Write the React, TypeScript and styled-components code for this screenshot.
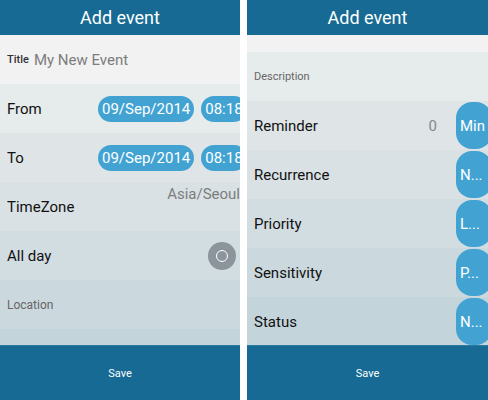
import styled, { createGlobalStyle } from "styled-components";

const Global = createGlobalStyle`
  *, *::before, *::after {
    box-sizing: border-box;
  }

  body {
    margin: 0;
    background: #ffffff;
    font-family: Roboto, "Open Sans", sans-serif;
  }
`;

const Shades = ["#f2f2f2", "#e6ebec", "#dfe5e7", "#d9e1e4", "#d2dde2", "#cbd8de", "#c4d4db"];

const Stage = styled.div`
  display: flex;
  gap: 7px;
  width: 488px;
  height: 400px;
`;

const Screen = styled.div<{ $width: number }>`
  display: flex;
  flex-direction: column;
  width: ${({ $width }) => $width}px;
  height: 400px;
  overflow: hidden;
`;

const Header = styled.div`
  align-items: center;
  background-color: #166a93;
  color: #ffffff;
  display: flex;
  flex: 0 0 35px;
  font-size: 18px;
  justify-content: center;
`;

const Content = styled.div`
  display: flex;
  flex: 1;
  flex-direction: column;
  min-height: 0;
  overflow: hidden;
`;

const Spacer = styled.div<{ $height: number; $shade: string }>`
  background-color: ${({ $shade }) => $shade};
  flex: 0 0 ${({ $height }) => $height}px;
`;

const Row = styled.div<{ $shade: string }>`
  align-items: center;
  background-color: ${({ $shade }) => $shade};
  display: flex;
  flex: 0 0 49px;
  gap: 7px;
  padding-left: 7px;
  position: relative;
`;

const Label = styled.span<{ $fixed?: boolean }>`
  color: #111111;
  flex: ${({ $fixed }) => ($fixed ? "0 0 84px" : "1")};
  font-size: 15px;
  white-space: nowrap;
`;

const Hint = styled.span<{ $size: number }>`
  color: #666666;
  font-size: ${({ $size }) => $size}px;
`;

const TitleRow = styled.div`
  align-items: center;
  display: flex;
  gap: 5px;
`;

const TitleTag = styled.span`
  color: #333333;
  font-size: 11px;
  font-weight: 500;
`;

const Placeholder = styled.span`
  color: #7d7d7d;
  font-size: 15px;
`;

const Pill = styled.span`
  background-color: #42a3d3;
  border-radius: 13px;
  color: #ffffff;
  flex: 0 0 auto;
  font-size: 15px;
  height: 26px;
  line-height: 26px;
  padding: 0 4px;
  white-space: nowrap;
`;

const SidePill = styled.span`
  align-items: center;
  align-self: stretch;
  background-color: #42a3d3;
  border-radius: 16px;
  color: #ffffff;
  display: flex;
  flex: 0 0 36px;
  font-size: 15px;
  margin: 1px -4px 1px 0;
  padding-left: 4px;
  white-space: nowrap;
`;

const Value = styled.span`
  color: #888888;
  font-size: 15px;
  margin-right: 12px;
`;

const Zone = styled.span`
  color: #7d7d7d;
  font-size: 15px;
  position: absolute;
  right: 0;
  top: 3px;
`;

const Toggle = styled.span`
  align-items: center;
  background-color: #8c959b;
  border-radius: 50%;
  display: flex;
  flex: 0 0 28px;
  height: 28px;
  justify-content: center;
  margin-right: 4px;

  &::after {
    border: 1.5px solid #ffffff;
    border-radius: 50%;
    content: "";
    height: 12px;
    width: 12px;
  }
`;

const Footer = styled.div`
  align-items: center;
  background-color: #166a93;
  border-top: 1px solid #2a7ca3;
  color: #ffffff;
  display: flex;
  flex: 0 0 55px;
  font-size: 11px;
  justify-content: center;
`;

const DateTime = () => (
  <>
    <Pill>09/Sep/2014</Pill>
    <Pill>08:18</Pill>
  </>
);

const sideRows = [
  { label: "Reminder", value: "0", pill: "Min" },
  { label: "Recurrence", pill: "N..." },
  { label: "Priority", pill: "L..." },
  { label: "Sensitivity", pill: "P..." },
  { label: "Status", pill: "N..." },
];

export default function App() {
  return (
    <>
      <Global />
      <Stage>
        <Screen $width={240}>
          <Header>Add event</Header>
          <Content>
            <Row $shade={Shades[0]}>
              <TitleRow>
                <TitleTag>Title</TitleTag>
                <Placeholder>My New Event</Placeholder>
              </TitleRow>
            </Row>
            <Row $shade={Shades[1]}>
              <Label $fixed>From</Label>
              <DateTime />
            </Row>
            <Row $shade={Shades[2]}>
              <Label $fixed>To</Label>
              <DateTime />
            </Row>
            <Row $shade={Shades[3]}>
              <Label>TimeZone</Label>
              <Zone>Asia/Seoul</Zone>
            </Row>
            <Row $shade={Shades[4]}>
              <Label>All day</Label>
              <Toggle />
            </Row>
            <Row $shade={Shades[5]}>
              <Hint $size={12}>Location</Hint>
            </Row>
            <Spacer $height={49} $shade={Shades[6]} />
          </Content>
          <Footer>Save</Footer>
        </Screen>
        <Screen $width={241}>
          <Header>Add event</Header>
          <Content>
            <Spacer $height={17} $shade={Shades[0]} />
            <Row $shade={Shades[1]}>
              <Hint $size={11}>Description</Hint>
            </Row>
            {sideRows.map((r, i) => (
              <Row key={r.label} $shade={Shades[i + 2]}>
                <Label>{r.label}</Label>
                {r.value && <Value>{r.value}</Value>}
                <SidePill>{r.pill}</SidePill>
              </Row>
            ))}
          </Content>
          <Footer>Save</Footer>
        </Screen>
      </Stage>
    </>
  );
}
